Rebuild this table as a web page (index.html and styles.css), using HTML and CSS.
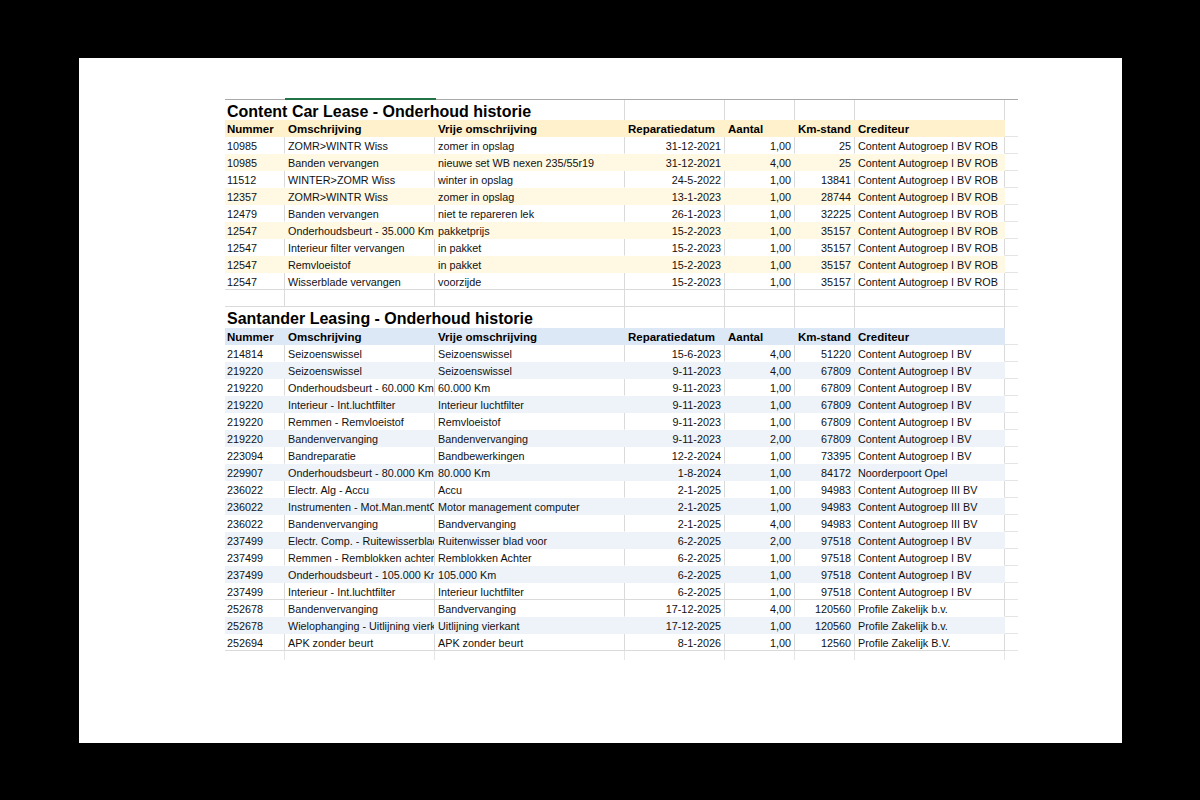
FILE: index.html
```html
<!DOCTYPE html>
<html lang="nl">
<head>
<meta charset="utf-8">
<title>Onderhoud historie</title>
<link rel="stylesheet" href="styles.css">
</head>
<body>
<div class="page">
  <div class="sheet">
    <div class="row title nb"><div class="c t">Content Car Lease - Onderhoud historie</div><div class="c"></div><div class="c"></div><div class="c"></div><div class="c"></div><div class="c x"></div></div>
    <div class="row head hy"><div class="c">Nummer</div><div class="c">Omschrijving</div><div class="c">Vrije omschrijving</div><div class="c">Reparatiedatum</div><div class="c">Aantal</div><div class="c">Km-stand</div><div class="c">Crediteur</div><div class="c x"></div></div>
    <div class="row nb"><div class="c">10985</div><div class="c">ZOMR&gt;WINTR Wiss</div><div class="c">zomer in opslag</div><div class="c r">31-12-2021</div><div class="c r">1,00</div><div class="c r">25</div><div class="c">Content Autogroep I BV ROB</div><div class="c x"></div></div>
    <div class="row by"><div class="c">10985</div><div class="c">Banden vervangen</div><div class="c">nieuwe set WB nexen 235/55r19</div><div class="c r">31-12-2021</div><div class="c r">4,00</div><div class="c r">25</div><div class="c">Content Autogroep I BV ROB</div><div class="c x"></div></div>
    <div class="row nb"><div class="c">11512</div><div class="c">WINTER&gt;ZOMR Wiss</div><div class="c">winter in opslag</div><div class="c r">24-5-2022</div><div class="c r">1,00</div><div class="c r">13841</div><div class="c">Content Autogroep I BV ROB</div><div class="c x"></div></div>
    <div class="row by"><div class="c">12357</div><div class="c">ZOMR&gt;WINTR Wiss</div><div class="c">zomer in opslag</div><div class="c r">13-1-2023</div><div class="c r">1,00</div><div class="c r">28744</div><div class="c">Content Autogroep I BV ROB</div><div class="c x"></div></div>
    <div class="row nb"><div class="c">12479</div><div class="c">Banden vervangen</div><div class="c">niet te repareren lek</div><div class="c r">26-1-2023</div><div class="c r">1,00</div><div class="c r">32225</div><div class="c">Content Autogroep I BV ROB</div><div class="c x"></div></div>
    <div class="row by"><div class="c">12547</div><div class="c">Onderhoudsbeurt - 35.000 Km</div><div class="c">pakketprijs</div><div class="c r">15-2-2023</div><div class="c r">1,00</div><div class="c r">35157</div><div class="c">Content Autogroep I BV ROB</div><div class="c x"></div></div>
    <div class="row nb"><div class="c">12547</div><div class="c">Interieur filter vervangen</div><div class="c">in pakket</div><div class="c r">15-2-2023</div><div class="c r">1,00</div><div class="c r">35157</div><div class="c">Content Autogroep I BV ROB</div><div class="c x"></div></div>
    <div class="row by"><div class="c">12547</div><div class="c">Remvloeistof</div><div class="c">in pakket</div><div class="c r">15-2-2023</div><div class="c r">1,00</div><div class="c r">35157</div><div class="c">Content Autogroep I BV ROB</div><div class="c x"></div></div>
    <div class="row"><div class="c">12547</div><div class="c">Wisserblade vervangen</div><div class="c">voorzijde</div><div class="c r">15-2-2023</div><div class="c r">1,00</div><div class="c r">35157</div><div class="c">Content Autogroep I BV ROB</div><div class="c x"></div></div>
    <div class="row"><div class="c"></div><div class="c"></div><div class="c"></div><div class="c"></div><div class="c"></div><div class="c"></div><div class="c"></div><div class="c x"></div></div>

    <div class="row title title2 nb"><div class="c t">Santander Leasing - Onderhoud historie</div><div class="c"></div><div class="c"></div><div class="c"></div><div class="c"></div><div class="c x"></div></div>
    <div class="row head hb"><div class="c">Nummer</div><div class="c">Omschrijving</div><div class="c">Vrije omschrijving</div><div class="c">Reparatiedatum</div><div class="c">Aantal</div><div class="c">Km-stand</div><div class="c">Crediteur</div><div class="c x"></div></div>
    <div class="row nb"><div class="c">214814</div><div class="c">Seizoenswissel</div><div class="c">Seizoenswissel</div><div class="c r">15-6-2023</div><div class="c r">4,00</div><div class="c r">51220</div><div class="c">Content Autogroep I BV</div><div class="c x"></div></div>
    <div class="row bb"><div class="c">219220</div><div class="c">Seizoenswissel</div><div class="c">Seizoenswissel</div><div class="c r">9-11-2023</div><div class="c r">4,00</div><div class="c r">67809</div><div class="c">Content Autogroep I BV</div><div class="c x"></div></div>
    <div class="row nb"><div class="c">219220</div><div class="c">Onderhoudsbeurt - 60.000 Km</div><div class="c">60.000 Km</div><div class="c r">9-11-2023</div><div class="c r">1,00</div><div class="c r">67809</div><div class="c">Content Autogroep I BV</div><div class="c x"></div></div>
    <div class="row bb"><div class="c">219220</div><div class="c">Interieur - Int.luchtfilter</div><div class="c">Interieur luchtfilter</div><div class="c r">9-11-2023</div><div class="c r">1,00</div><div class="c r">67809</div><div class="c">Content Autogroep I BV</div><div class="c x"></div></div>
    <div class="row nb"><div class="c">219220</div><div class="c">Remmen - Remvloeistof</div><div class="c">Remvloeistof</div><div class="c r">9-11-2023</div><div class="c r">1,00</div><div class="c r">67809</div><div class="c">Content Autogroep I BV</div><div class="c x"></div></div>
    <div class="row bb"><div class="c">219220</div><div class="c">Bandenvervanging</div><div class="c">Bandenvervanging</div><div class="c r">9-11-2023</div><div class="c r">2,00</div><div class="c r">67809</div><div class="c">Content Autogroep I BV</div><div class="c x"></div></div>
    <div class="row nb"><div class="c">223094</div><div class="c">Bandreparatie</div><div class="c">Bandbewerkingen</div><div class="c r">12-2-2024</div><div class="c r">1,00</div><div class="c r">73395</div><div class="c">Content Autogroep I BV</div><div class="c x"></div></div>
    <div class="row bb"><div class="c">229907</div><div class="c">Onderhoudsbeurt - 80.000 Km</div><div class="c">80.000 Km</div><div class="c r">1-8-2024</div><div class="c r">1,00</div><div class="c r">84172</div><div class="c">Noorderpoort Opel</div><div class="c x"></div></div>
    <div class="row nb"><div class="c">236022</div><div class="c">Electr. Alg - Accu</div><div class="c">Accu</div><div class="c r">2-1-2025</div><div class="c r">1,00</div><div class="c r">94983</div><div class="c">Content Autogroep III BV</div><div class="c x"></div></div>
    <div class="row bb"><div class="c">236022</div><div class="c">Instrumenten - Mot.Man.mentComputer</div><div class="c">Motor management computer</div><div class="c r">2-1-2025</div><div class="c r">1,00</div><div class="c r">94983</div><div class="c">Content Autogroep III BV</div><div class="c x"></div></div>
    <div class="row nb"><div class="c">236022</div><div class="c">Bandenvervanging</div><div class="c">Bandvervanging</div><div class="c r">2-1-2025</div><div class="c r">4,00</div><div class="c r">94983</div><div class="c">Content Autogroep III BV</div><div class="c x"></div></div>
    <div class="row bb"><div class="c">237499</div><div class="c">Electr. Comp. - Ruitewisserblad</div><div class="c">Ruitenwisser blad voor</div><div class="c r">6-2-2025</div><div class="c r">2,00</div><div class="c r">97518</div><div class="c">Content Autogroep I BV</div><div class="c x"></div></div>
    <div class="row nb"><div class="c">237499</div><div class="c">Remmen - Remblokken achter</div><div class="c">Remblokken Achter</div><div class="c r">6-2-2025</div><div class="c r">1,00</div><div class="c r">97518</div><div class="c">Content Autogroep I BV</div><div class="c x"></div></div>
    <div class="row bb"><div class="c">237499</div><div class="c">Onderhoudsbeurt - 105.000 Km</div><div class="c">105.000 Km</div><div class="c r">6-2-2025</div><div class="c r">1,00</div><div class="c r">97518</div><div class="c">Content Autogroep I BV</div><div class="c x"></div></div>
    <div class="row"><div class="c">237499</div><div class="c">Interieur - Int.luchtfilter</div><div class="c">Interieur luchtfilter</div><div class="c r">6-2-2025</div><div class="c r">1,00</div><div class="c r">97518</div><div class="c">Content Autogroep I BV</div><div class="c x"></div></div>
    <div class="row nb"><div class="c">252678</div><div class="c">Bandenvervanging</div><div class="c">Bandvervanging</div><div class="c r">17-12-2025</div><div class="c r">4,00</div><div class="c r">120560</div><div class="c">Profile Zakelijk b.v.</div><div class="c x"></div></div>
    <div class="row bb"><div class="c">252678</div><div class="c">Wielophanging - Uitlijning vierkant</div><div class="c">Uitlijning vierkant</div><div class="c r">17-12-2025</div><div class="c r">1,00</div><div class="c r">120560</div><div class="c">Profile Zakelijk b.v.</div><div class="c x"></div></div>
    <div class="row"><div class="c">252694</div><div class="c">APK zonder beurt</div><div class="c">APK zonder beurt</div><div class="c r">8-1-2026</div><div class="c r">1,00</div><div class="c r">12560</div><div class="c">Profile Zakelijk B.V.</div><div class="c x"></div></div>
    <div class="row tail"><div class="c"></div><div class="c"></div><div class="c"></div><div class="c"></div><div class="c"></div><div class="c"></div><div class="c"></div><div class="c x"></div></div>
  </div>
</div>
</body>
</html>
```
FILE: styles.css
```css
html, body {
  margin: 0;
  padding: 0;
  background: #000;
}

.page {
  margin: 58px 0 0 79px;
  width: 1043px;
  height: 685px;
  box-sizing: border-box;
  padding: 41px 0 0 146px;
  background: #fff;
}

.sheet {
  position: relative;
  width: 793px;
  border-top: 1px solid #a9a9a9;
  font-family: "Liberation Sans", Arial, sans-serif;
  font-size: 10.8px;
  color: #111;
}

.sheet::before {
  content: "";
  position: absolute;
  left: 60px;
  top: -2px;
  width: 151px;
  height: 2px;
  background: #217346;
}

.row {
  display: grid;
  grid-template-columns: 60px 150px 190px 100px 70px 60px 150px 13px;
  height: 17px;
}

.c {
  box-sizing: border-box;
  border-right: 1px solid #dadada;
  border-bottom: 1px solid #dadada;
  padding: 1px 3px 0 2px;
  line-height: 16px;
  white-space: nowrap;
  overflow: hidden;
}

.c:nth-child(n+2) {
  padding-left: 3px;
}

.c.r {
  text-align: right;
}

.c.x {
  border-right: none;
  border-bottom-color: #e4e4e4;
  padding: 0;
  background: #fff;
}

/* white row directly above a filled row: its bottom gridline is hidden */
.row.nb .c:not(.x) {
  border-bottom-color: transparent;
}

/* filled rows hide their gridlines */
.row.hy .c:not(.x),
.row.by .c:not(.x),
.row.hb .c:not(.x),
.row.bb .c:not(.x) {
  border-color: transparent;
}

.row.hy .c:not(.x) { background: #fff1cb; }
.row.by .c:not(.x) { background: #fff8e3; }
.row.hb .c:not(.x) { background: #dde8f6; }
.row.bb .c:not(.x) { background: #eef3fa; }

.row.head .c {
  font-weight: bold;
  font-size: 11.5px;
  color: #000;
}

.row.title {
  height: 20px;
  grid-template-columns: 400px 100px 70px 60px 150px 13px;
}

.row.title2 {
  height: 21px;
}

.c.t {
  font-size: 16px;
  font-weight: bold;
  line-height: 20px;
  padding: 2px 0 0 2px;
  color: #000;
  overflow: visible;
}

.row.tail {
  height: 9px;
}

.row.tail .c {
  border-bottom: none;
  border-right-color: #e6e6e6;
}
```
